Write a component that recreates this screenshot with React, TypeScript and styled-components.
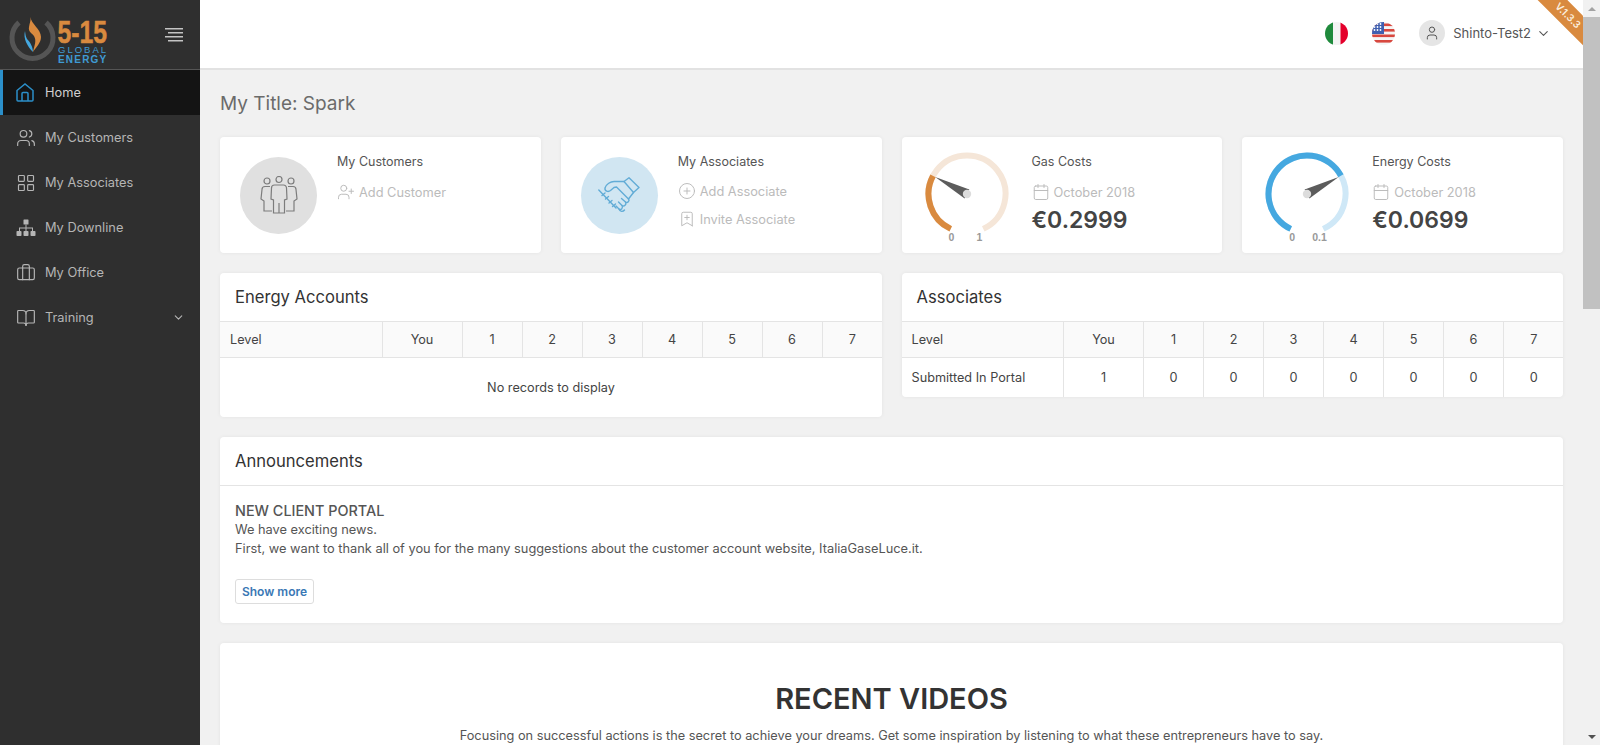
import React from "react";
import styled, { createGlobalStyle } from "styled-components";
import { Users, LayoutGrid, Briefcase, BookOpen, ChevronDown, UserPlus, CirclePlus, BookmarkPlus, Calendar, User } from "lucide-react";

const GlobalStyle = createGlobalStyle`
    html, body {
        margin: 0;
        padding: 0;
        height: 100%;
        overflow: hidden;
    }
    body {
        font-family: Inter, "Noto Sans", "Liberation Sans", sans-serif;
        font-size: 13px;
        color: #555;
    }
`;

const LEVELS = ["1", "2", "3", "4", "5", "6", "7"];

function polar(cx: number, cy: number, r: number, deg: number) {
    const a = (deg * Math.PI) / 180;
    return [cx + r * Math.sin(a), cy - r * Math.cos(a)];
}

function arc(cx: number, cy: number, r: number, from: number, to: number) {
    const [x1, y1] = polar(cx, cy, r, from);
    const [x2, y2] = polar(cx, cy, r, to);
    const large = to - from > 180 ? 1 : 0;
    return `M${x1} ${y1} A${r} ${r} 0 ${large} 1 ${x2} ${y2}`;
}

function Gauge({ value, track, color, max }: { value: number; track: string; color: string; max: string }) {
    // dial runs from 205deg through the top round to 155deg, 310deg in all
    const start = -155;
    const end = 155;
    const at = start + value * (end - start);
    const [tx, ty] = polar(43, 43, 36, at);
    const [bx1, by1] = polar(43, 43, 5, at + 90);
    const [bx2, by2] = polar(43, 43, 5, at - 90);
    return (
        <GaugeBox>
            <svg width="86" height="86" viewBox="0 0 86 86">
                <path d={arc(43, 43, 38.5, start, end)} fill="none" stroke={track} strokeWidth="6" />
                <path d={arc(43, 43, 38.5, start, at)} fill="none" stroke={color} strokeWidth="6" />
                <polygon points={`${tx},${ty} ${bx1},${by1} ${bx2},${by2}`} fill="#5c5c5c" />
                <circle cx="43" cy="43" r="4.2" fill="#dcdcdc" />
            </svg>
            <GaugeLabel $left={25}>0</GaugeLabel>
            <GaugeLabel $left={max === "1" ? 53 : 48}>{max}</GaugeLabel>
        </GaugeBox>
    );
}

function Logo() {
    return (
        <svg width="110" height="60" viewBox="0 0 110 60">
            <path d="M19 17.5 A20.5 20.5 0 1 0 46 17.5" fill="none" stroke="#555" strokeWidth="5" strokeLinecap="butt" />
            <path d="M30.5 12 C31 19 41 24 41 32 C41 38 36 42 33 47 C34 41 37 36 34 31 C32 28 28 27 29 22 C29.5 18 31 16 30.5 12Z" fill="#d98a3f" />
            <path d="M25 26 C23 33 27 41 33 47 C33 42 30 37 27 34 C25.5 31.5 25.5 29 25 26Z" fill="#45a8e0" />
            <text transform="translate(57.5 37.5) scale(0.8 1)" fontFamily="'Liberation Sans', sans-serif" fontSize="31" fontWeight="700" fill="#d98a3f" stroke="#d98a3f" strokeWidth="0.5">5-15</text>
            <text x="58" y="47.5" fontFamily="'Liberation Sans', sans-serif" fontSize="9.5" fill="#3f9bd4" letterSpacing="2">GLOBAL</text>
            <text x="58" y="57.5" fontFamily="'Liberation Sans', sans-serif" fontSize="10" fontWeight="700" fill="#3f9bd4" letterSpacing="1.2">ENERGY</text>
        </svg>
    );
}

function HomeIcon() {
    return (
        <svg width="18" height="19" viewBox="0 0 18 19" fill="none" stroke="#2b8fc9" strokeWidth="1.5">
            <path d="M1 7.5 L9 1 L17 7.5 V17 a1 1 0 0 1 -1 1 H2 a1 1 0 0 1 -1 -1Z" />
            <path d="M6 18 V10.5 a1 1 0 0 1 1 -1 H11 a1 1 0 0 1 1 1 V18" />
        </svg>
    );
}

function SitemapIcon() {
    return (
        <svg width="20" height="18" viewBox="0 0 20 18" fill="#b5b5b5">
            <rect x="7.5" y="0.5" width="5" height="5" rx="0.5" />
            <rect x="0.5" y="12" width="5" height="5" rx="0.8" />
            <rect x="7.5" y="12" width="5" height="5" rx="0.8" />
            <rect x="14.5" y="12" width="5" height="5" rx="0.8" />
            <path d="M9.5 5.5h1v3h6.5v4h-1v-3h-5.5v3h-1v-3H4v3H3v-4h6.5z" />
        </svg>
    );
}

function PeopleIcon() {
    return (
        <svg width="38" height="40" viewBox="0 0 38 40" fill="none" stroke="#7c7c7c" strokeWidth="1.2">
            <circle cx="7" cy="5" r="3" />
            <circle cx="19" cy="3.5" r="3" />
            <circle cx="31" cy="5" r="3" />
            <path d="M10 10.500 H5 a3 3 0 0 0 -3 3 L1 23 L4 25 V35 H12 " />
            <path d="M28 10.500 H33 a3 3 0 0 1 3 3 L37 23 L34 25 V35 H26" />
            <path d="M19 27 V37 H13.5 V24 L11 23 L11.5 12 a3 3 0 0 1 3 -3 H23.5 a3 3 0 0 1 3 3 L27 23 L24.5 24 V37 H19" />
        </svg>
    );
}

function HandshakeIcon() {
    return (
        <svg width="42" height="37" viewBox="0 0 42 37" fill="none" stroke="#62acd6" strokeWidth="1.4" strokeLinejoin="round" strokeLinecap="round">
            {/* cuffs */}
            <path d="M26 4.500 L31 0.800 L41 10.500 L35.500 15.500Z" />
            <path d="M0.800 13 L18 31" />
            <path d="M4 18.500 L7 16 M7.500 22 L10.500 19.500 M11 26 L14 23.500 M14.500 29.500 L17.500 27" />
            {/* thumb and upper hand */}
            <path d="M26 4.500 H17 C12.500 4 8 7.500 7 11 C6.500 14 10 15.500 12.500 13.500 L16 10.500 L18.500 10 L30.500 22 L35.500 15.500" />
            {/* fingers */}
            <path d="M30.500 22 C32 24 29.500 26.500 27.500 25 L23.500 21.500" />
            <path d="M27.500 25 C29 27.500 26 30 24 28.500 L20.500 25" />
            <path d="M24 28.500 C25.500 31 23 33.500 21 32 L18 29" />
            <path d="M21 32 C22 35 25 35 26.500 33" />
        </svg>
    );
}

function UsFlag() {
    return (
        <svg width="23" height="23" viewBox="0 0 23 23">
            <defs>
                <clipPath id="us-clip"><circle cx="11.5" cy="11.500" r="11.500" /></clipPath>
            </defs>
            <g clipPath="url(#us-clip)">
                <rect width="23" height="23" fill="#f5f5f5" />
                {[1.5, 7, 12.5, 18].map((y) => (
                    <rect key={y} x="0" y={y} width="23" height="2.6" fill="#d8483f" />
                ))}
                <rect width="12" height="12" fill="#3f5fb0" />
                {[2, 5, 8].map((y) =>
                    [2.5, 5.5, 8.5].map((x) => <circle key={`${x}-${y}`} cx={x} cy={y} r="0.9" fill="#fff" />)
                )}
            </g>
        </svg>
    );
}

function ItFlag() {
    return (
        <svg width="23" height="23" viewBox="0 0 23 23">
            <defs>
                <clipPath id="it-clip"><circle cx="11.5" cy="11.500" r="11.500" /></clipPath>
            </defs>
            <g clipPath="url(#it-clip)">
                <rect width="8" height="23" fill="#1f8a3c" />
                <rect x="8" width="7.500" height="23" fill="#f3f3f3" />
                <rect x="15.5" width="7.500" height="23" fill="#e4002b" />
            </g>
        </svg>
    );
}

function LevelTable({ rows }: { rows?: (string | number)[] }) {
    return (
        <Table>
            <thead>
                <tr>
                    <HeadCell $width={162} $left>Level</HeadCell>
                    <HeadCell $width={80}>You</HeadCell>
                    {LEVELS.map((l) => <HeadCell key={l} $width={60}>{l}</HeadCell>)}
                </tr>
            </thead>
            <tbody>
                {rows ? (
                    <tr>
                        {rows.map((v, i) => <BodyCell key={i} $left={i === 0}>{v}</BodyCell>)}
                    </tr>
                ) : (
                    <tr>
                        <EmptyCell colSpan={9}>No records to display</EmptyCell>
                    </tr>
                )}
            </tbody>
        </Table>
    );
}

export default function App() {
    return (
        <Shell>
            <GlobalStyle />
            <Sidebar>
                <Brand>
                    <Logo />
                    <svg width="18" height="14" viewBox="0 0 18 14" fill="#c4c4c4">
                        <rect x="0" y="0" width="18" height="1.500" />
                        <rect x="3" y="4" width="15" height="1.500" />
                        <rect x="0" y="8" width="18" height="1.500" />
                        <rect x="3" y="12" width="15" height="1.500" />
                    </svg>
                </Brand>
                <Nav>
                    <NavItem $active><NavIcon><HomeIcon /></NavIcon>Home</NavItem>
                    <NavItem><NavIcon><Users size={20} strokeWidth={1.4} /></NavIcon>My Customers</NavItem>
                    <NavItem><NavIcon><LayoutGrid size={20} strokeWidth={1.4} /></NavIcon>My Associates</NavItem>
                    <NavItem><NavIcon><SitemapIcon /></NavIcon>My Downline</NavItem>
                    <NavItem><NavIcon><Briefcase size={20} strokeWidth={1.4} /></NavIcon>My Office</NavItem>
                    <NavItem><NavIcon><BookOpen size={20} strokeWidth={1.4} /></NavIcon>Training<NavCaret><ChevronDown size={13} /></NavCaret></NavItem>
                </Nav>
            </Sidebar>
            <Main>
                <Topbar>
                    <FlagButton><ItFlag /></FlagButton>
                    <FlagButton><UsFlag /></FlagButton>
                    <UserMenu>
                        <Avatar><User size={16} strokeWidth={1.5} /></Avatar>
                        Shinto-Test2
                        <MenuCaret><ChevronDown size={15} strokeWidth={1.7} /></MenuCaret>
                    </UserMenu>
                    <Corner><Ribbon>V.1.3.3</Ribbon></Corner>
                </Topbar>
                <Content>
                    <PageTitle>My Title: Spark</PageTitle>
                    <Cards>
                        <Card>
                            <Disc $bg="#e0e0e0"><PeopleIcon /></Disc>
                            <CardBody>
                                <CardTitle>My Customers</CardTitle>
                                <CardLink><UserPlus size={18} strokeWidth={1.3} />Add Customer</CardLink>
                            </CardBody>
                        </Card>
                        <Card>
                            <Disc $bg="#d1e6f2"><HandshakeIcon /></Disc>
                            <CardBody>
                                <CardTitle>My Associates</CardTitle>
                                <CardLink><CirclePlus size={18} strokeWidth={1.3} />Add Associate</CardLink>
                                <CardLink><BookmarkPlus size={18} strokeWidth={1.3} />Invite Associate</CardLink>
                            </CardBody>
                        </Card>
                        <Card>
                            <Gauge value={0.2999} track="#f5e6d8" color="#d98a3f" max="1" />
                            <CardBody>
                                <CardTitle>Gas Costs</CardTitle>
                                <CardLink><Calendar size={18} strokeWidth={1.3} />October 2018</CardLink>
                                <Amount>€0.2999</Amount>
                            </CardBody>
                        </Card>
                        <Card>
                            <Gauge value={0.699} track="#cfe8f7" color="#45a8e0" max="0.1" />
                            <CardBody>
                                <CardTitle>Energy Costs</CardTitle>
                                <CardLink><Calendar size={18} strokeWidth={1.3} />October 2018</CardLink>
                                <Amount>€0.0699</Amount>
                            </CardBody>
                        </Card>
                    </Cards>
                    <TwoCols>
                        <Panel>
                            <PanelHead>Energy Accounts</PanelHead>
                            <LevelTable />
                        </Panel>
                        <Panel>
                            <PanelHead>Associates</PanelHead>
                            <LevelTable rows={["Submitted In Portal", 1, 0, 0, 0, 0, 0, 0, 0]} />
                        </Panel>
                    </TwoCols>
                    <Panel>
                        <PanelHead>Announcements</PanelHead>
                        <AnnounceBody>
                            <AnnounceTitle>NEW CLIENT PORTAL</AnnounceTitle>
                            <AnnounceText>We have exciting news.</AnnounceText>
                            <AnnounceText>First, we want to thank all of you for the many suggestions about the customer account website, ItaliaGaseLuce.it.</AnnounceText>
                            <ShowMore>Show more</ShowMore>
                        </AnnounceBody>
                    </Panel>
                    <VideosPanel>
                        <VideosTitle>RECENT VIDEOS</VideosTitle>
                        <VideosText>Focusing on successful actions is the secret to achieve your dreams. Get some inspiration by listening to what these entrepreneurs have to say.</VideosText>
                    </VideosPanel>
                </Content>
            </Main>
            <ScrollRail>
                <ScrollUp />
                <ScrollThumb />
                <ScrollDown />
            </ScrollRail>
        </Shell>
    );
}

const Shell = styled.div`
    display: flex;
    height: 100vh;
    background-color: #f1f1f1;
`;

const Sidebar = styled.aside`
    width: 200px;
    flex: none;
    background-color: #2f2f2f;
`;

const Brand = styled.div`
    height: 70px;
    box-sizing: border-box;
    display: flex;
    align-items: center;
    justify-content: space-between;
    padding: 0 17px 0 0;
    border-bottom: 1px solid #555;
`;

const Nav = styled.nav`
    display: flex;
    flex-direction: column;
`;

const NavItem = styled.div<{ $active?: boolean }>`
    height: 45px;
    box-sizing: border-box;
    display: flex;
    align-items: center;
    padding-left: ${(p) => (p.$active ? "13px" : "16px")};
    border-left: ${(p) => (p.$active ? "3px solid #2b8fc9" : "none")};
    background-color: ${(p) => (p.$active ? "#141414" : "transparent")};
    color: ${(p) => (p.$active ? "#cfcfcf" : "#b5b5b5")};
    font-size: 12.8px;
`;

const NavIcon = styled.span`
    width: 29px;
    flex: none;
    display: flex;
    align-items: center;
`;

const NavCaret = styled.span`
    margin-left: auto;
    margin-right: 15px;
    display: flex;
`;

const Main = styled.main`
    flex: 1;
    min-width: 0;
    overflow: hidden;
`;

const ScrollRail = styled.div`
    width: 17px;
    flex: none;
    display: flex;
    flex-direction: column;
    background-color: #f1f1f1;
`;

const ScrollUp = styled.div`
    height: 17px;
    flex: none;
    display: flex;
    align-items: center;
    justify-content: center;

    &::before {
        content: "";
        border-left: 4px solid transparent;
        border-right: 4px solid transparent;
        border-bottom: 4px solid #a3a3a3;
    }
`;

const ScrollThumb = styled.div`
    height: 292px;
    flex: none;
    background-color: #c1c1c1;
`;

const ScrollDown = styled.div`
    flex: 1;
    display: flex;
    align-items: flex-end;
    justify-content: center;
    padding-bottom: 6px;

    &::before {
        content: "";
        border-left: 4px solid transparent;
        border-right: 4px solid transparent;
        border-top: 4px solid #505050;
    }
`;

const Topbar = styled.header`
    position: relative;
    height: 70px;
    box-sizing: border-box;
    display: flex;
    align-items: center;
    justify-content: flex-end;
    padding: 0 32px 2px 0;
    background-color: #fff;
    border-bottom: 2px solid #e2e2e2;
`;

const FlagButton = styled.span`
    display: flex;
    margin-right: 24px;
`;

const UserMenu = styled.div`
    display: flex;
    align-items: center;
    gap: 8px;
    color: #555;
    font-size: 13px;
`;

const MenuCaret = styled.span`
    display: flex;
    margin-left: -3px;
`;

const Avatar = styled.span`
    width: 26px;
    height: 26px;
    border-radius: 50%;
    background-color: #e5e5e5;
    display: flex;
    align-items: center;
    justify-content: center;
`;

const Corner = styled.div`
    position: absolute;
    top: 0;
    right: 0;
    width: 46px;
    height: 46px;
    overflow: hidden;
`;

const Ribbon = styled.div`
    position: absolute;
    left: -19px;
    top: 5px;
    width: 100px;
    height: 21px;
    line-height: 21px;
    background-color: #d98a3f;
    color: #fbeedd;
    font-size: 10px;
    font-weight: 600;
    text-align: center;
    transform: rotate(45deg);
`;

const Content = styled.div`
    display: flex;
    flex-direction: column;
    gap: 20px;
    padding: 20px;
`;

const PageTitle = styled.h1`
    margin: 0;
    height: 27px;
    line-height: 27px;
    font-size: 19px;
    font-weight: 400;
    color: #6b6b6b;
`;

const Cards = styled.div`
    display: grid;
    grid-template-columns: repeat(4, 1fr);
    gap: 20px;
`;

const Card = styled.div`
    height: 116px;
    box-sizing: border-box;
    display: flex;
    padding: 20px;
    background-color: #fff;
    border-radius: 4px;
    box-shadow: 0 0 4px rgba(0, 0, 0, 0.06);
`;

const Disc = styled.div<{ $bg: string }>`
    width: 77px;
    height: 77px;
    flex: none;
    border-radius: 50%;
    background-color: ${(p) => p.$bg};
    display: flex;
    align-items: center;
    justify-content: center;
    margin-right: 20px;
`;

const GaugeBox = styled.div`
    position: relative;
    width: 86px;
    height: 86px;
    flex: none;
    margin: -6px 22px 0 2px;
`;

const GaugeLabel = styled.span`
    position: absolute;
    left: ${(p: { $left: number }) => p.$left}px;
    top: 80px;
    font-size: 10.5px;
    line-height: 12px;
    font-weight: 700;
    color: #999;
    font-family: "Liberation Sans", sans-serif;
`;

const CardBody = styled.div`
    display: flex;
    flex-direction: column;
    margin-top: -3px;
`;

const CardTitle = styled.div`
    height: 16px;
    line-height: 16px;
    font-size: 12.5px;
    color: #555;
    margin-bottom: 7px;
`;

const CardLink = styled.div`
    height: 30px;
    display: flex;
    align-items: center;
    gap: 4px;
    font-size: 12.8px;
    color: #bbb;
`;

const Amount = styled.div`
    font-size: 23px;
    line-height: 26px;
    font-weight: 600;
    color: #444;
`;

const TwoCols = styled.div`
    display: grid;
    grid-template-columns: 1fr 1fr;
    gap: 20px;
    align-items: start;
`;

const Panel = styled.section`
    background-color: #fff;
    border-radius: 4px;
    box-shadow: 0 0 4px rgba(0, 0, 0, 0.06);
    overflow: hidden;
`;

const PanelHead = styled.div`
    height: 49px;
    box-sizing: border-box;
    padding: 0 15px;
    display: flex;
    align-items: center;
    font-size: 16.6px;
    color: #333;
    border-bottom: 1px solid #e4e4e4;
`;

const Table = styled.table`
    width: 100%;
    table-layout: fixed;
    border-collapse: collapse;
    font-size: 12.7px;
    color: #444;
`;

const HeadCell = styled.th<{ $width: number; $left?: boolean }>`
    width: ${(p) => p.$width}px;
    height: 35px;
    box-sizing: border-box;
    padding: 0 10px;
    background-color: #fafafa;
    font-weight: 400;
    text-align: ${(p) => (p.$left ? "left" : "center")};
    border-bottom: 1px solid #e4e4e4;
    border-right: 1px solid #e4e4e4;
    &:last-child {
        border-right: none;
    }
`;

const BodyCell = styled.td<{ $left?: boolean }>`
    height: 40px;
    box-sizing: border-box;
    padding: 0 10px;
    text-align: ${(p) => (p.$left ? "left" : "center")};
    white-space: nowrap;
    border-right: 1px solid #e4e4e4;
    &:last-child {
        border-right: none;
    }
`;

const EmptyCell = styled.td`
    height: 57px;
    text-align: center;
`;

const AnnounceBody = styled.div`
    padding: 15px 15px 19px;
`;

const AnnounceTitle = styled.div`
    font-size: 14.4px;
    font-weight: 500;
    line-height: 19px;
    color: #555;
`;

const AnnounceText = styled.div`
    font-size: 12.8px;
    line-height: 19px;
    color: #555;
`;

const ShowMore = styled.button`
    display: block;
    margin-top: 21px;
    width: 79px;
    height: 25px;
    padding: 0;
    background-color: #fff;
    border: 1px solid #ddd;
    border-radius: 3px;
    font-family: inherit;
    font-size: 12px;
    font-weight: 600;
    color: #3a78b5;
`;

const VideosPanel = styled.section`
    height: 1150px;
    flex: none;
    background-color: #fff;
    border-radius: 4px;
    box-shadow: 0 0 4px rgba(0, 0, 0, 0.06);
    padding: 38px 20px 20px;
    box-sizing: border-box;
    text-align: center;
`;

const VideosTitle = styled.h2`
    margin: 0 0 10px;
    line-height: 36px;
    font-size: 29px;
    font-weight: 600;
    color: #333;
`;

const VideosText = styled.p`
    margin: 0;
    font-size: 12.75px;
    line-height: 18px;
    color: #555;
`;
